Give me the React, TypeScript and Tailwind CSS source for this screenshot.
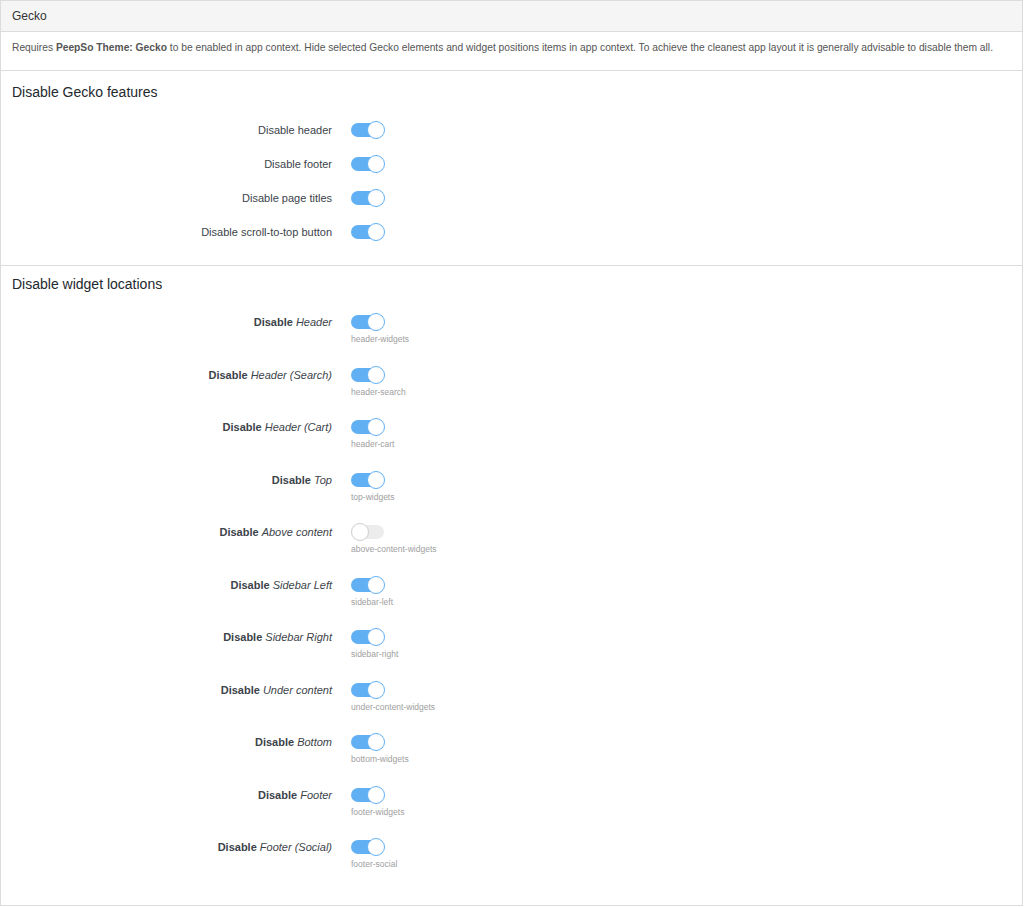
import React from "react";

const features = [
  "Disable header",
  "Disable footer",
  "Disable page titles",
  "Disable scroll-to-top button",
];

const widgets: { name: string; hint: string; on: boolean }[] = [
  { name: "Header", hint: "header-widgets", on: true },
  { name: "Header (Search)", hint: "header-search", on: true },
  { name: "Header (Cart)", hint: "header-cart", on: true },
  { name: "Top", hint: "top-widgets", on: true },
  { name: "Above content", hint: "above-content-widgets", on: false },
  { name: "Sidebar Left", hint: "sidebar-left", on: true },
  { name: "Sidebar Right", hint: "sidebar-right", on: true },
  { name: "Under content", hint: "under-content-widgets", on: true },
  { name: "Bottom", hint: "bottom-widgets", on: true },
  { name: "Footer", hint: "footer-widgets", on: true },
  { name: "Footer (Social)", hint: "footer-social", on: true },
];

function Toggle({ on }: { on: boolean }) {
  return (
    <div className="relative w-[34px] h-[18px] shrink-0">
      <div
        className={
          "absolute left-0 top-[2px] w-[33px] h-[14px] rounded-full " +
          (on ? "bg-[#62b0f4]" : "bg-[#ececec]")
        }
      />
      <div
        className={
          "absolute top-0 w-[18px] h-[18px] rounded-full bg-white border-[1.5px] " +
          (on ? "left-[16px] border-[#62b0f4]" : "left-0 border-[#cfcfcf]")
        }
      />
    </div>
  );
}

export default function App() {
  return (
    <div
      className="w-[1023px] h-[906px] bg-white border border-[#dcdcdc] text-[#3c434a] flex flex-col"
      style={{ fontFamily: '"Liberation Sans", Arial, sans-serif' }}
    >
      <div className="h-[31px] bg-[#f5f5f5] border-b border-[#dcdcdc] flex items-center px-[11px] text-[12px] text-[#333]">
        Gecko
      </div>
      <div className="h-[39px] border-b border-[#dcdcdc] flex items-center px-[11px] pb-[6px] text-[10.25px] text-[#555] whitespace-nowrap">
        <span>
          Requires <b className="font-bold">PeepSo Theme: Gecko</b> to be enabled in app context. Hide selected Gecko elements and widget positions items in app context. To achieve the cleanest app layout it is generally advisable to disable them all.
        </span>
      </div>

      <div className="border-b border-[#dcdcdc] pt-[11px] pb-[16px]">
        <div className="px-[11px] text-[14px] leading-[20px] text-[#23282d]">Disable Gecko features</div>
        <div className="mt-[11px] flex flex-col">
          {features.map((f) => (
            <div key={f} className="h-[34px] flex items-center">
              <div className="w-[331px] text-right text-[11px] text-[#3c434a]">{f}</div>
              <div className="ml-[19px]">
                <Toggle on={true} />
              </div>
            </div>
          ))}
        </div>
      </div>

      <div className="flex-1 pt-[8px]">
        <div className="px-[11px] text-[14px] leading-[20px] text-[#23282d]">Disable widget locations</div>
        <div className="mt-[19px] flex flex-col">
          {widgets.map((w) => (
            <div key={w.hint} className="h-[52.5px] flex items-start">
              <div className="w-[331px] text-right text-[11px] leading-[18px] text-[#3c434a]">
                <b className="font-bold">Disable</b> <i className="italic">{w.name}</i>
              </div>
              <div className="ml-[19px] flex flex-col">
                <Toggle on={w.on} />
                <div className="mt-[3px] text-[8.5px] leading-[11px] text-[#a0a0a0]">{w.hint}</div>
              </div>
            </div>
          ))}
        </div>
      </div>
    </div>
  );
}
